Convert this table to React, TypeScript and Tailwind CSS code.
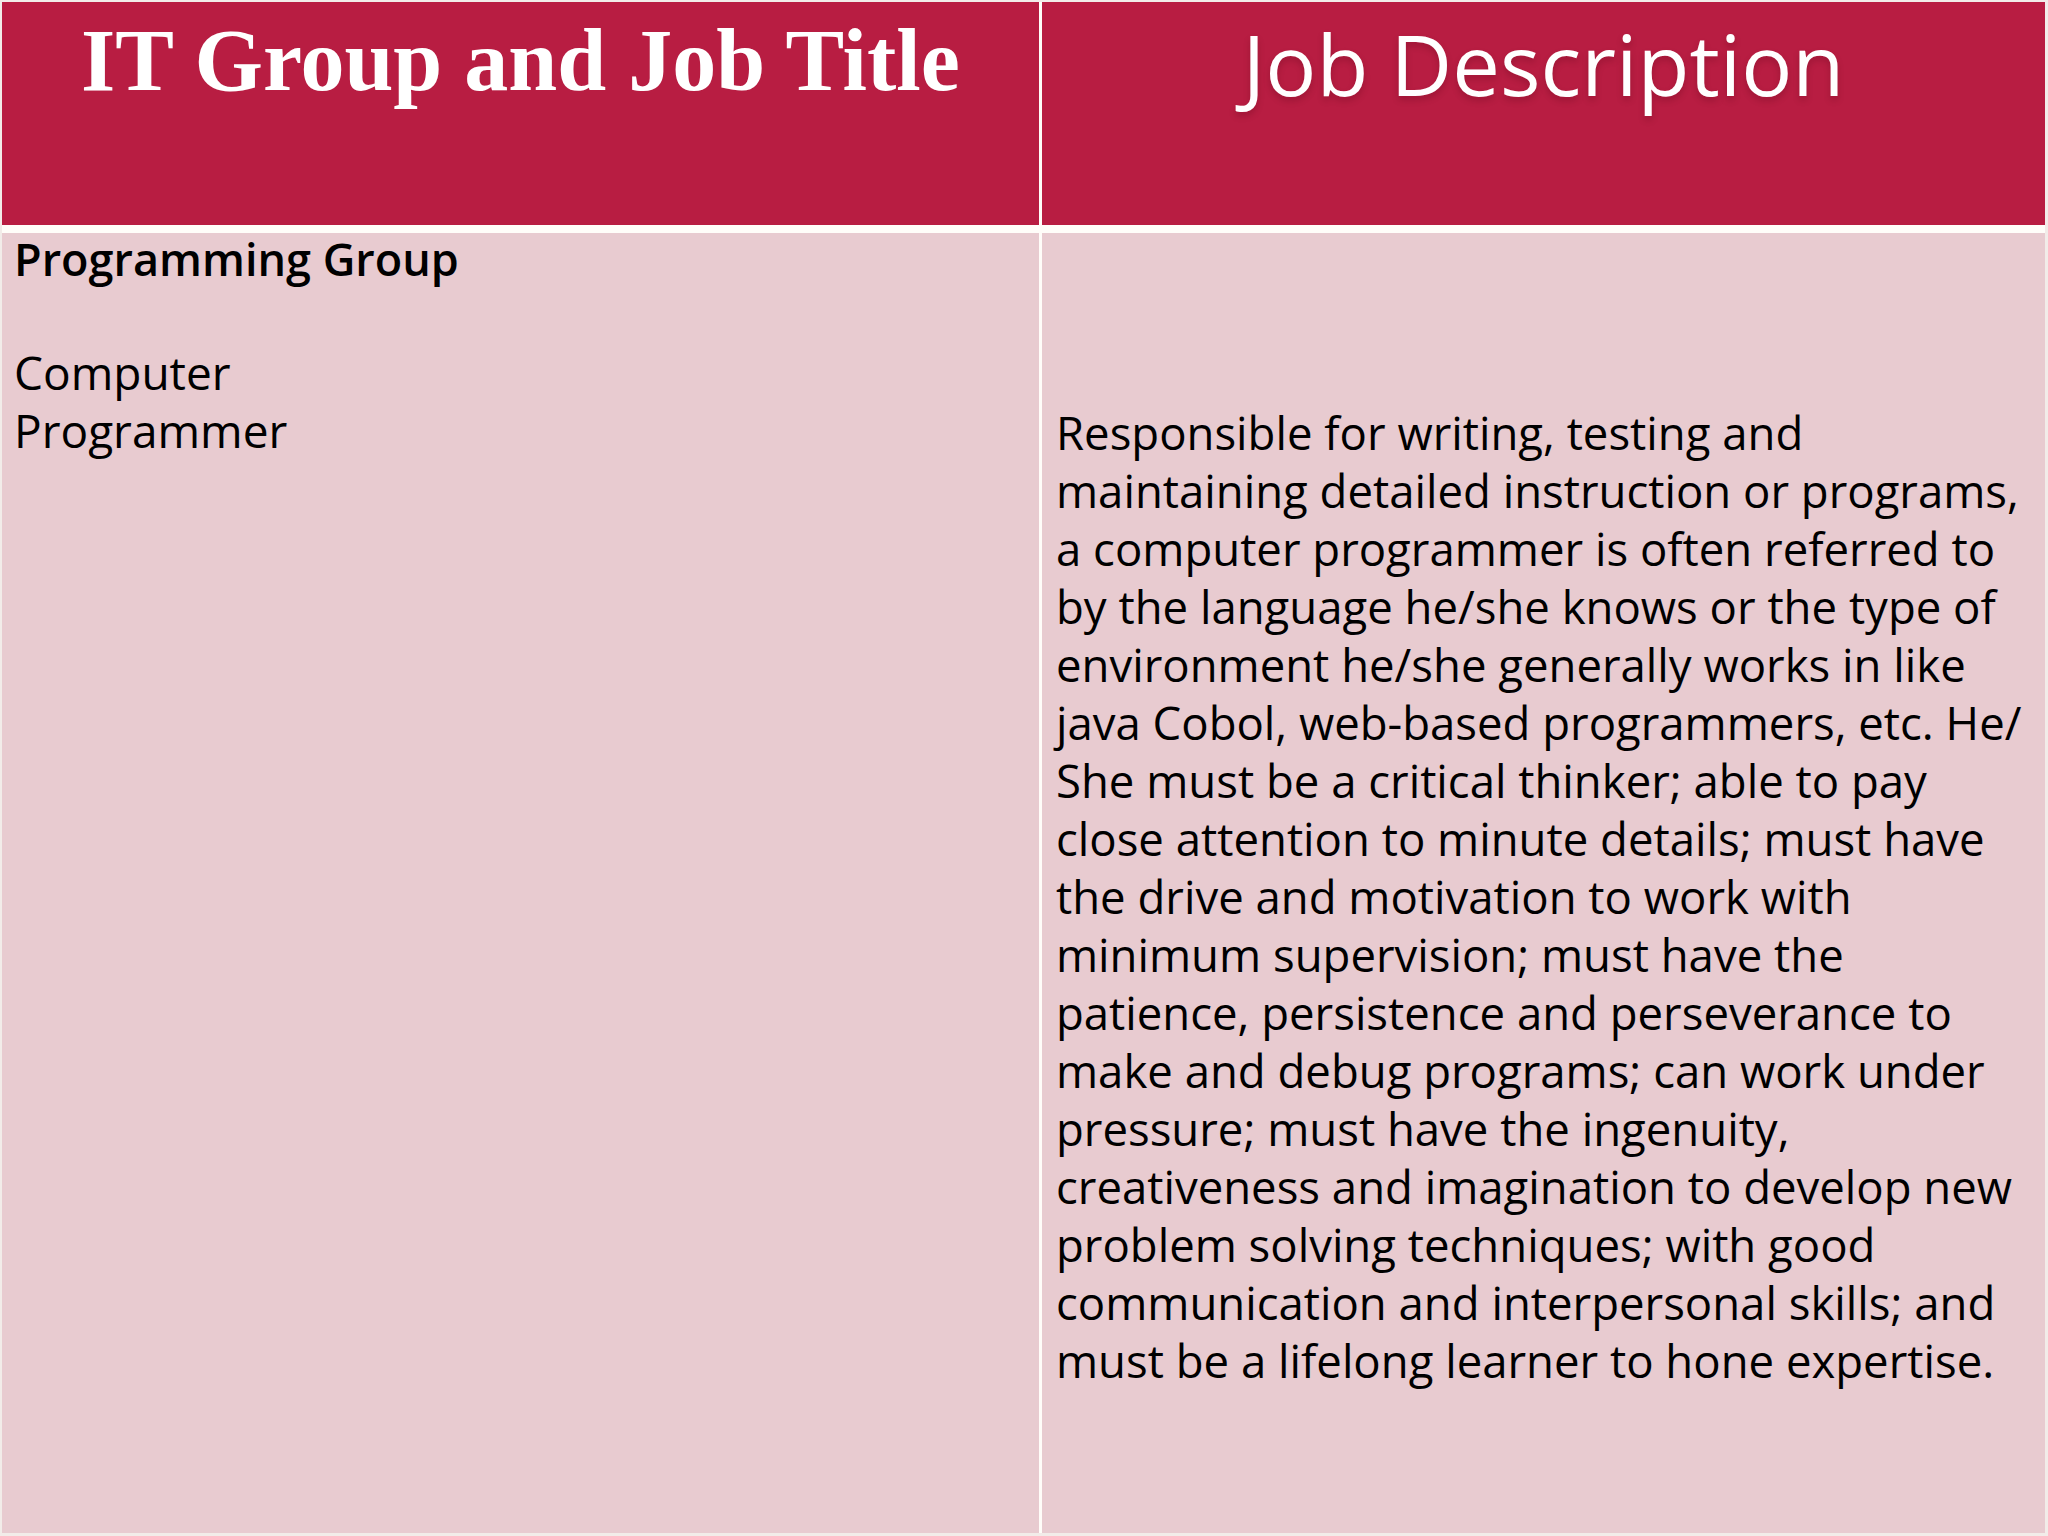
const description = [
  "Responsible for writing, testing and",
  "maintaining detailed instruction or programs,",
  "a computer programmer is often referred to",
  "by the language he/she knows or the type of",
  "environment he/she generally works in like",
  "java Cobol, web-based programmers, etc. He/",
  "She must be a critical thinker; able to pay",
  "close attention to minute details; must have",
  "the drive and motivation to work with",
  "minimum supervision; must have the",
  "patience, persistence and perseverance to",
  "make and debug programs; can work under",
  "pressure; must have the ingenuity,",
  "creativeness and imagination to develop new",
  "problem solving techniques; with good",
  "communication and interpersonal skills; and",
  "must be a lifelong learner to hone expertise.",
];

const sans = "font-['Open_Sans','Noto_Sans',sans-serif]";

export default function App() {
  return (
    <div className="w-[2048px] h-[1536px] bg-[#f2ece9] pt-[2px] pl-[2px]">
      <div className="grid grid-cols-[1037px_1003px] grid-rows-[223px_1300px] gap-x-[3px] gap-y-[8px] bg-[#fffdf9] w-[2043px]">
        {/* header row */}
        <div className="bg-[#b81d42] pt-[15px] text-center">
          <h1 className="font-['Liberation_Serif','Times_New_Roman',serif] font-bold text-white text-[88px] leading-none">
            IT Group and Job Title
          </h1>
        </div>
        <div className="bg-[#b81d42] pt-[19px] text-center">
          <h1 className={`${sans} text-white text-[85px] leading-none [text-shadow:0_4px_6px_rgba(80,0,20,0.25)]`}>
            Job Description
          </h1>
        </div>

        {/* body row */}
        <div className={`bg-[#e8cbd0] pl-[12px] ${sans} text-black text-[46px] leading-[58px]`}>
          <p className="font-semibold text-[45px] leading-[52px]">Programming Group</p>
          <p>&nbsp;</p>
          <p>Computer</p>
          <p>Programmer</p>
        </div>
        <div className={`bg-[#e8cbd0] pl-[14px] pt-[170px] ${sans} text-black text-[45.5px] leading-[58px]`}>
          {description.map((line, i) => (
            <p key={i} className="whitespace-nowrap">
              {line}
            </p>
          ))}
        </div>
      </div>
    </div>
  );
}
